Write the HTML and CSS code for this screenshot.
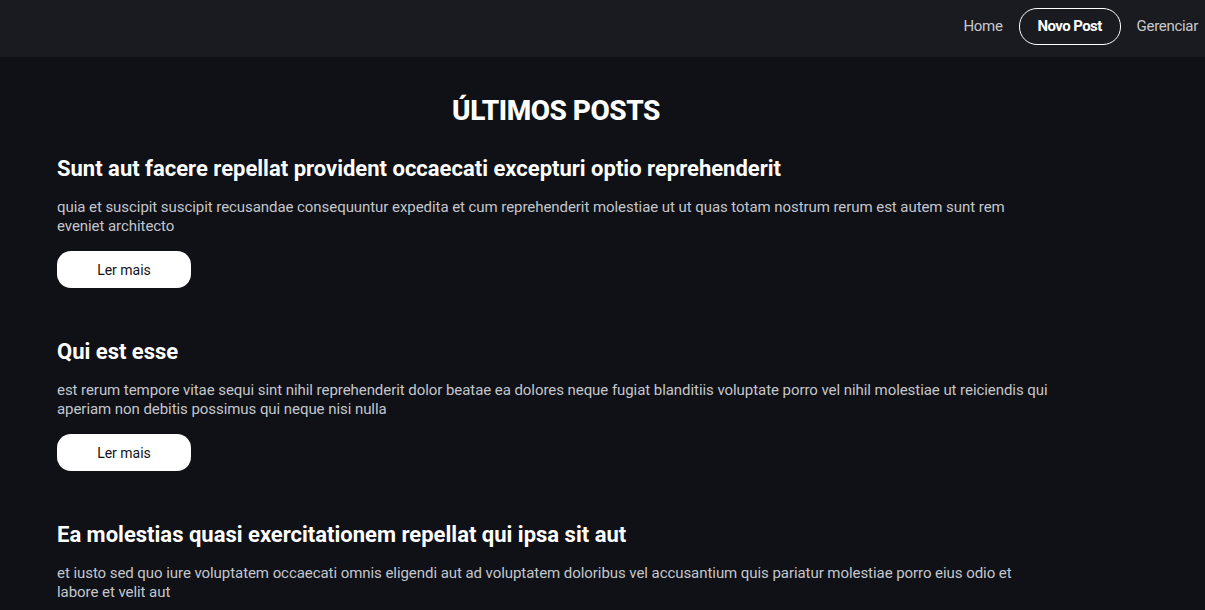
FILE: index.html
```html
<!DOCTYPE html>
<html lang="pt-BR">
<head>
<meta charset="utf-8">
<title>Blog</title>
<link rel="stylesheet" href="styles.css">
</head>
<body>
<header class="topbar">
  <nav class="nav">
    <a class="nav-link" href="#">Home</a>
    <a class="nav-link nav-primary" href="#">Novo Post</a>
    <a class="nav-link" href="#">Gerenciar</a>
  </nav>
</header>
<main class="main">
  <h1 class="page-title">ÚLTIMOS POSTS</h1>
  <article class="post">
    <h2 class="post-title">Sunt aut facere repellat provident occaecati excepturi optio reprehenderit</h2>
    <p class="post-body">quia et suscipit suscipit recusandae consequuntur expedita et cum reprehenderit molestiae ut ut quas totam nostrum rerum est autem sunt rem eveniet architecto</p>
    <button class="btn">Ler mais</button>
  </article>
  <article class="post">
    <h2 class="post-title">Qui est esse</h2>
    <p class="post-body">est rerum tempore vitae sequi sint nihil reprehenderit dolor beatae ea dolores neque fugiat blanditiis voluptate porro vel nihil molestiae ut reiciendis qui aperiam non debitis possimus qui neque nisi nulla</p>
    <button class="btn">Ler mais</button>
  </article>
  <article class="post">
    <h2 class="post-title">Ea molestias quasi exercitationem repellat qui ipsa sit aut</h2>
    <p class="post-body">et iusto sed quo iure voluptatem occaecati omnis eligendi aut ad voluptatem doloribus vel accusantium quis pariatur molestiae porro eius odio et labore et velit aut</p>
    <button class="btn">Ler mais</button>
  </article>
</main>
</body>
</html>
```
FILE: styles.css
```css
* { box-sizing: border-box; }
html, body { margin: 0; padding: 0; }
body {
  background: #0f1117;
  color: #ffffff;
  font-family: Roboto, "Liberation Sans", sans-serif;
  overflow: hidden;
}
.topbar {
  height: 57px;
  background: #1a1b20;
  display: flex;
  justify-content: flex-end;
  align-items: center;
  padding-right: 7px;
}
.nav {
  display: flex;
  align-items: center;
  gap: 16px;
  margin-top: -5px;
}
.nav-link {
  color: #c9c9cc;
  text-decoration: none;
  font-size: 15px;
  letter-spacing: -0.3px;
}
.nav-primary {
  color: #ffffff;
  font-weight: 700;
  border: 1px solid #ffffff;
  border-radius: 18px;
  height: 37px;
  width: 102px;
  display: flex;
  align-items: center;
  justify-content: center;
  letter-spacing: -0.6px;
}
.main {
  width: 1055px;
  padding-left: 57px;
  padding-top: 37px;
}
.page-title {
  margin: 0 0 27px;
  text-align: center;
  font-size: 28px;
  font-weight: 800;
  letter-spacing: -0.5px;
  line-height: 34px;
}
.post { margin-bottom: 50px; }
.post-title {
  margin: 0 0 15px;
  font-size: 22px;
  font-weight: 700;
  letter-spacing: 0;
  line-height: 28px;
}
.post-body {
  margin: 0 0 15px;
  font-size: 15px;
  line-height: 19px;
  color: #c4c6cc;
  letter-spacing: -0.06px;
}
.btn {
  width: 134px;
  height: 37px;
  border: none;
  border-radius: 14px;
  background: #ffffff;
  color: #111318;
  font-family: inherit;
  font-size: 14px;
  letter-spacing: 0;
  cursor: pointer;
}
```
